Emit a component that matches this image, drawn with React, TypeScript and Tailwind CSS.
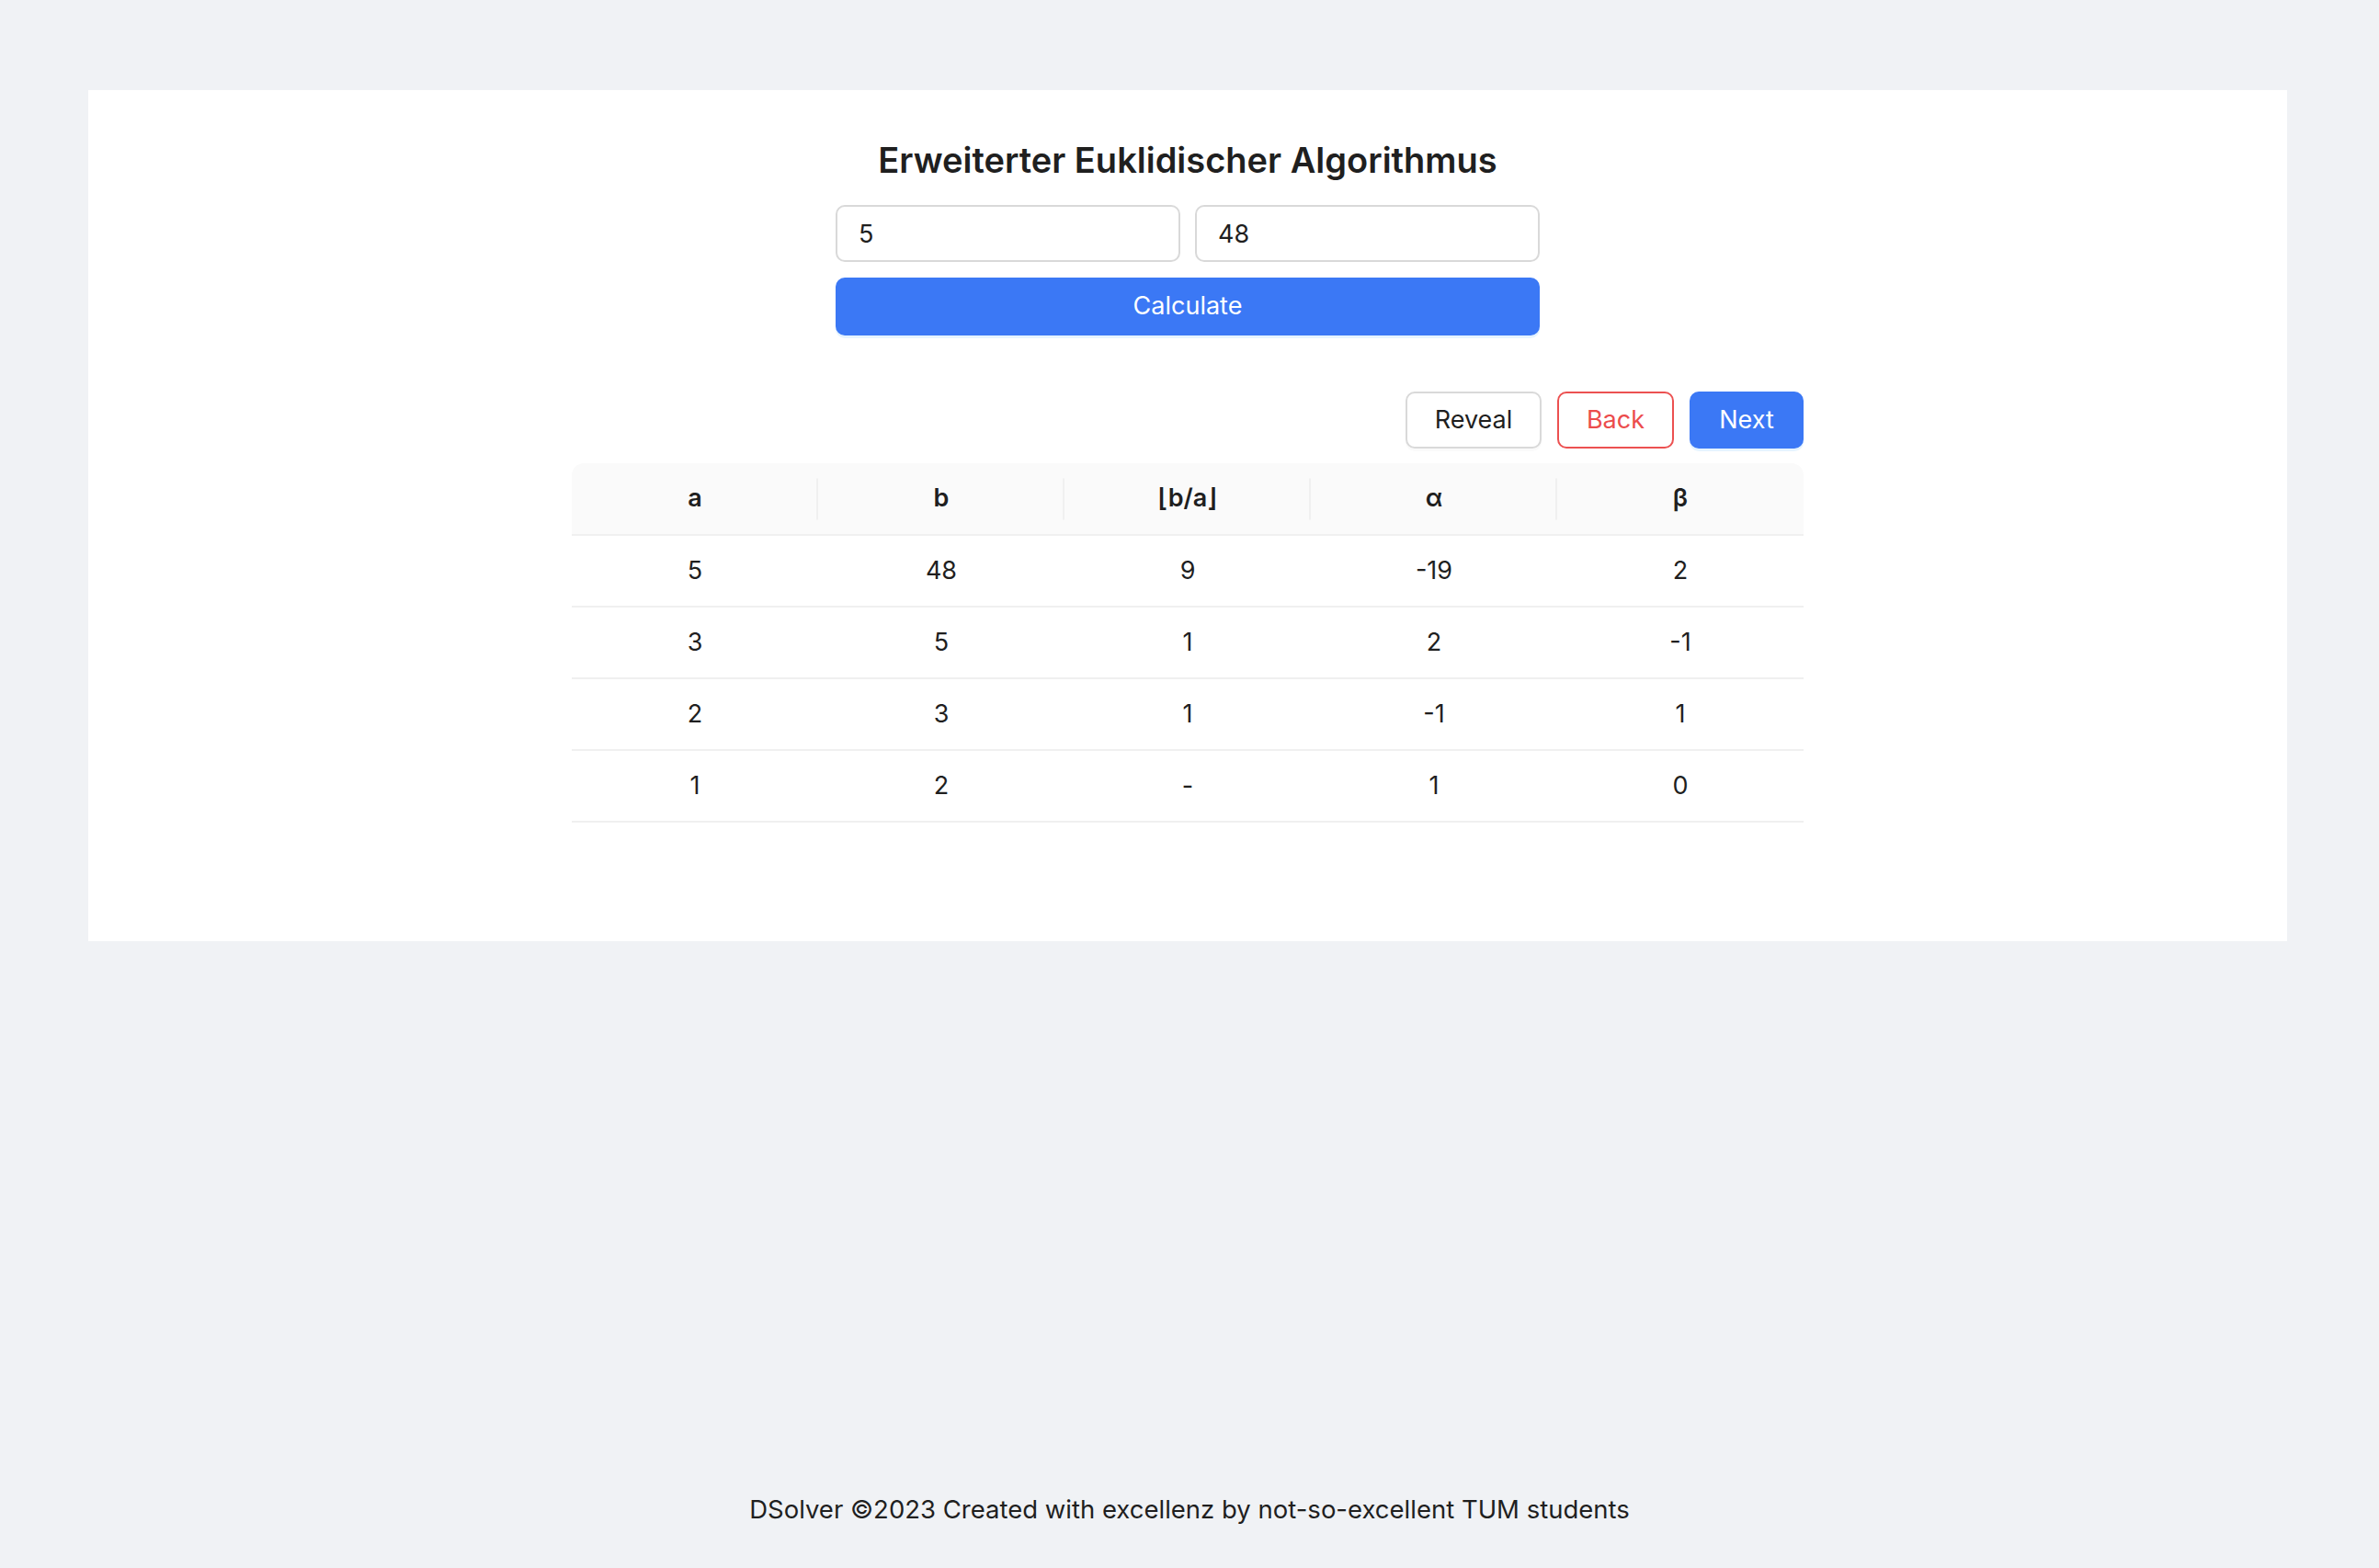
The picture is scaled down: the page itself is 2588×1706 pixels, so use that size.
import { useState } from "react"

type Row = { a: string; b: string; q: string; alpha: string; beta: string }

const rows: Row[] = [
  { a: "5", b: "48", q: "9", alpha: "-19", beta: "2" },
  { a: "3", b: "5", q: "1", alpha: "2", beta: "-1" },
  { a: "2", b: "3", q: "1", alpha: "-1", beta: "1" },
  { a: "1", b: "2", q: "-", alpha: "1", beta: "0" },
]

const headers = ["a", "b", "⌊b/a⌋", "α", "β"]

export default function App() {
  const [a, setA] = useState("5")
  const [b, setB] = useState("48")

  return (
    <div className="flex h-[1706px] flex-col bg-[#f0f2f5] font-['Inter','Liberation_Sans',sans-serif] text-[#1f1f1f]">
      <div className="ml-[96px] mt-[98px] flex h-[926px] w-[2392px] flex-col items-center bg-white">
        <h1 className="pt-[50px] text-[38px] font-semibold leading-[52px]">
          Erweiterter Euklidischer Algorithmus
        </h1>

        <div className="mt-[23px] flex w-[766px] flex-col">
          <div className="flex gap-[16px]">
            <input
              value={a}
              onChange={(e) => setA(e.target.value)}
              className="h-[62px] w-full rounded-[10px] border-2 border-[#d9d9d9] bg-white px-[23px] text-[27px] outline-none"
            />
            <input
              value={b}
              onChange={(e) => setB(e.target.value)}
              className="h-[62px] w-full rounded-[10px] border-2 border-[#d9d9d9] bg-white px-[23px] text-[27px] outline-none"
            />
          </div>
          <button
            type="button"
            className="mt-[17px] h-[63px] w-full rounded-[10px] bg-[#3b78f5] text-[27px] text-white shadow-[0_3px_0_rgba(5,145,255,0.1)]"
          >
            Calculate
          </button>
        </div>

        <div className="mt-[61px] flex w-[1340px] flex-col">
          <div className="flex justify-end gap-[17px]">
            <button
              type="button"
              className="h-[62px] w-[148px] rounded-[10px] border-2 border-[#d9d9d9] bg-white text-[27px] shadow-[0_3px_0_rgba(0,0,0,0.02)]"
            >
              Reveal
            </button>
            <button
              type="button"
              className="h-[62px] w-[127px] rounded-[10px] border-2 border-[#ec5151] bg-white text-[27px] text-[#ec4c4c]"
            >
              Back
            </button>
            <button
              type="button"
              className="h-[62px] w-[124px] rounded-[10px] bg-[#3b78f5] text-[27px] text-white shadow-[0_3px_0_rgba(5,145,255,0.1)]"
            >
              Next
            </button>
          </div>

          <table className="mt-[16px] w-full table-fixed border-collapse text-[27px]">
            <thead>
              <tr>
                {headers.map((h, i) => (
                  <th
                    key={h}
                    className={`relative h-[78px] border-b-2 border-[#f0f0f0] bg-[#fafafa] text-center font-semibold ${
                      i === 0 ? "rounded-tl-[13px]" : ""
                    } ${i === headers.length - 1 ? "rounded-tr-[13px]" : ""}`}
                  >
                    {h}
                    {i < headers.length - 1 && (
                      <span className="absolute right-0 top-1/2 h-[45px] w-[2px] -translate-y-1/2 bg-[#f0f0f0]" />
                    )}
                  </th>
                ))}
              </tr>
            </thead>
            <tbody>
              {rows.map((r, i) => (
                <tr key={i}>
                  {[r.a, r.b, r.q, r.alpha, r.beta].map((v, j) => (
                    <td key={j} className="h-[78px] border-b-2 border-[#f0f0f0] text-center">
                      {v}
                    </td>
                  ))}
                </tr>
              ))}
            </tbody>
          </table>
        </div>
      </div>

      <footer className="mt-[600px] text-center text-[27.5px] leading-[36px]">
        DSolver ©2023 Created with excellenz by not-so-excellent TUM students
      </footer>
    </div>
  )
}
